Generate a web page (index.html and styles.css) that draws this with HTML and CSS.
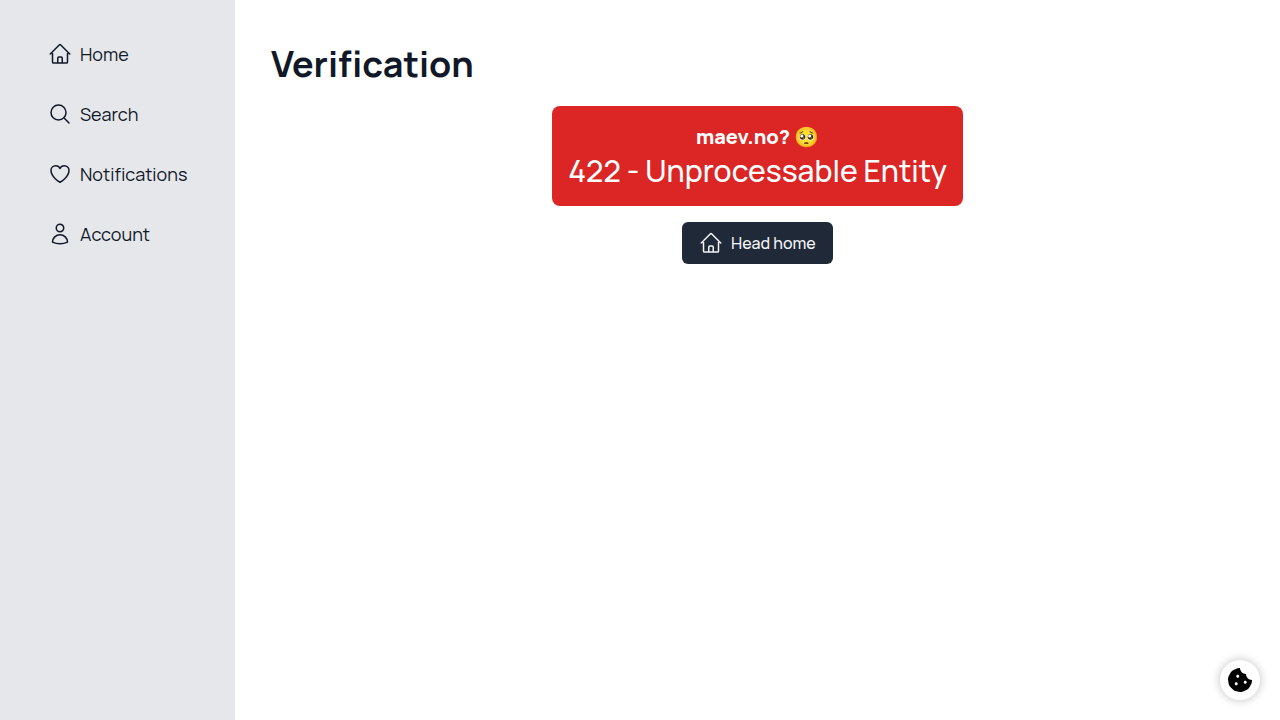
FILE: index.html
```html
<!DOCTYPE html>
<html lang="en">
<head>
<meta charset="utf-8">
<title>Verification</title>
<link rel="stylesheet" href="styles.css">
</head>
<body>
<svg class="sprite" aria-hidden="true">
  <symbol id="home" viewBox="0 0 24 24"><path d="M2.25 12l8.954-8.955c.44-.439 1.152-.439 1.591 0L21.75 12M4.5 9.75v10.125c0 .621.504 1.125 1.125 1.125H9.75v-4.875c0-.621.504-1.125 1.125-1.125h2.25c.621 0 1.125.504 1.125 1.125V21h4.125c.621 0 1.125-.504 1.125-1.125V9.75M8.25 21h8.25"/></symbol>
</svg>
<div class="app">
  <nav class="sidebar">
    <a class="link"><svg class="icon"><use href="#home"/></svg><span>Home</span></a>
    <a class="link"><svg class="icon" viewBox="0 0 24 24"><path d="M21 21l-5.197-5.197m0 0A7.5 7.5 0 105.196 5.196a7.5 7.5 0 0010.607 10.607z"/></svg><span>Search</span></a>
    <a class="link"><svg class="icon" viewBox="0 0 24 24"><path d="M21 8.25c0-2.485-2.099-4.5-4.688-4.5-1.935 0-3.597 1.126-4.312 2.733-.715-1.607-2.377-2.733-4.313-2.733C5.1 3.75 3 5.765 3 8.25c0 7.22 9 12 9 12s9-4.78 9-12z"/></svg><span>Notifications</span></a>
    <a class="link"><svg class="icon" viewBox="0 0 24 24"><path d="M15.75 6a3.75 3.75 0 11-7.5 0 3.75 3.75 0 017.5 0zM4.501 20.118a7.5 7.5 0 0114.998 0A17.933 17.933 0 0112 21.75c-2.676 0-5.216-.584-7.499-1.632z"/></svg><span>Account</span></a>
  </nav>
  <main class="main">
    <h1 class="title">Verification</h1>
    <div class="content">
      <div class="alert">
        <p class="alert-name">maev.no? 🥺</p>
        <p class="alert-text">422 - Unprocessable Entity</p>
      </div>
      <a class="button"><svg class="icon"><use href="#home"/></svg><span>Head home</span></a>
    </div>
  </main>
</div>
<button class="cookie" aria-label="Cookie settings"><svg width="24" height="24" viewBox="0 0 512 512"><path d="M510.52 255.82c-69.97-.85-126.47-57.69-126.47-127.86-70.17 0-127-56.49-127.86-126.45-27.26-4.14-55.13.3-79.72 12.82l-69.13 35.22a132.221 132.221 0 0 0-57.79 57.81l-35.1 68.88a132.645 132.645 0 0 0-12.82 80.95l12.08 76.27a132.521 132.521 0 0 0 37.16 72.96l54.77 54.76a132.036 132.036 0 0 0 72.71 37.06l76.71 12.15c27.51 4.36 55.7-.11 80.53-12.76l69.13-35.21a132.273 132.273 0 0 0 57.79-57.81l35.1-68.88c12.56-24.64 17.01-52.58 12.91-79.91zM176 368c-17.67 0-32-14.33-32-32s14.33-32 32-32 32 14.33 32 32-14.33 32-32 32zm32-160c-17.67 0-32-14.33-32-32s14.33-32 32-32 32 14.33 32 32-14.33 32-32 32zm160 128c-17.67 0-32-14.33-32-32s14.33-32 32-32 32 14.33 32 32-14.33 32-32 32z"/></svg></button>
</body>
</html>
```
FILE: styles.css
```css
* { box-sizing: border-box; }
body { margin: 0; background: #fff; color: #111827; font-family: Manrope, Inter, sans-serif; -webkit-font-smoothing: antialiased; }
p, h1 { margin: 0; }
.sprite { display: none; }
.app { display: flex; height: 100vh; }
.sidebar { width: 235px; flex: none; background: #e5e7eb; padding: 32px 40px; display: flex; flex-direction: column; gap: 16px; }
.link { display: flex; align-items: center; gap: 8px; height: 44px; padding: 0 8px; font-size: 18px; line-height: 28px; white-space: nowrap; }
.icon { width: 24px; height: 24px; flex: none; fill: none; stroke: currentColor; stroke-width: 1.5; stroke-linecap: round; stroke-linejoin: round; }
.main { flex: 1; padding: 44px 36px; }
.title { font-size: 36px; line-height: 40px; font-weight: 700; }
.content { display: flex; flex-direction: column; align-items: center; gap: 16px; margin-top: 22px; }
.alert { width: 411px; height: 100px; padding: 16px 0; border-radius: 8px; background: #dc2626; color: #fff; text-align: center; white-space: nowrap; }
.alert-name { font-size: 20px; line-height: 28px; font-weight: 800; padding-top: 1px; }
.alert-text { font-size: 30px; line-height: 36px; font-weight: 500; padding-top: 2px; }
.button { width: 151px; height: 42px; display: flex; align-items: center; gap: 8px; padding: 0 17px; border-radius: 6px; background: #1f2937; color: #f3f4f6; font-size: 16px; font-weight: 500; white-space: nowrap; }
.cookie { position: fixed; right: 20px; bottom: 20px; width: 40px; height: 40px; padding: 0; border: 0; border-radius: 50%; background: #fff; display: grid; place-items: center; box-shadow: 0 0 10px rgba(0, 0, 0, 0.25); }
```
